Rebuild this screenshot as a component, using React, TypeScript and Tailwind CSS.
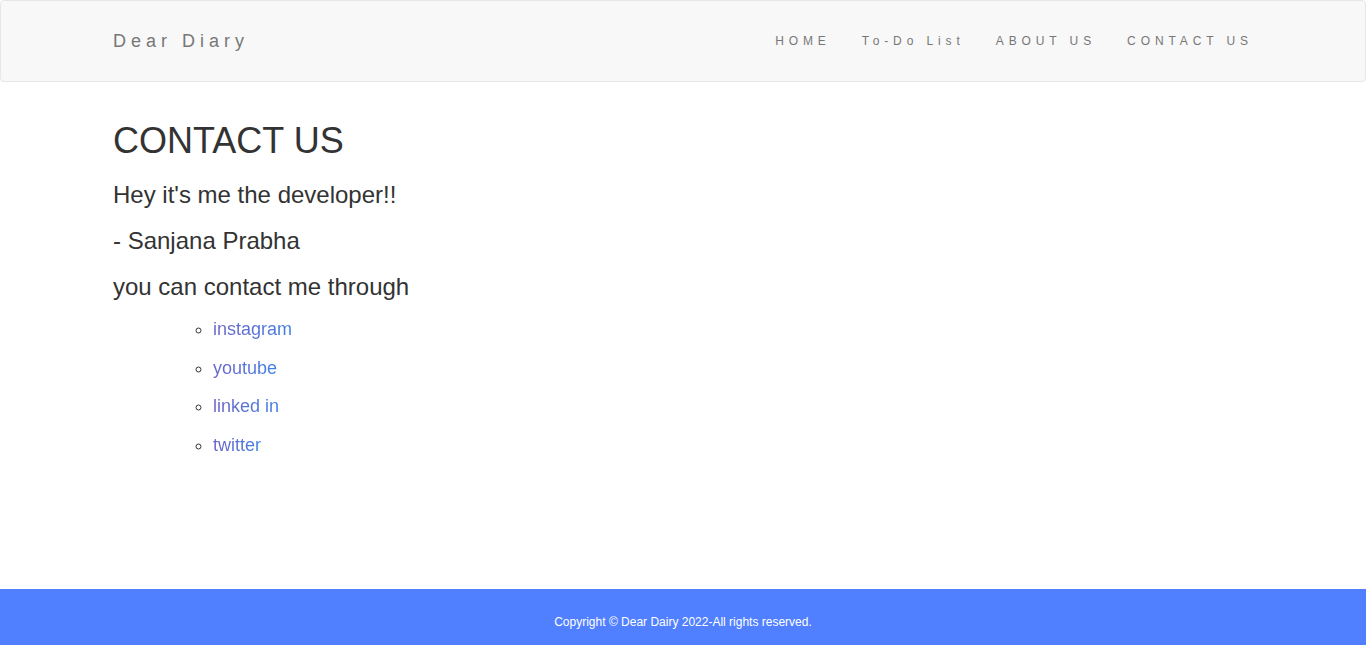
const navLinks = ["HOME", "To-Do List", "ABOUT US", "CONTACT US"];
const contacts = ["instagram", "youtube", "linked in", "twitter"];

export default function App() {
  return (
    <div className="flex min-h-[645px] flex-col bg-white font-['Liberation_Sans',Arial,sans-serif] text-[#333]">
      <nav className="h-[82px] rounded border border-[#e7e7e7] bg-[#f8f8f8]">
        <div className="mx-auto flex h-full w-[1170px] items-center justify-between px-[15px]">
          <a className="text-[18px] tracking-[5px] text-[#777]">Dear Diary</a>
          <ul className="flex items-center gap-[31px]">
            {navLinks.map((link) => (
              <li key={link} className="text-[12px] tracking-[4.9px] text-[#777]">
                {link}
              </li>
            ))}
          </ul>
        </div>
      </nav>

      <main className="mx-auto w-[1170px] flex-1 px-[15px]">
        <h1 className="mt-[39px] text-[36px] leading-[40px]">CONTACT US</h1>
        <p className="mt-[17px] text-[24px] leading-[34px]">Hey it's me the developer!!</p>
        <p className="mt-[12px] text-[24px] leading-[34px]">- Sanjana Prabha</p>
        <p className="mt-[12px] text-[24px] leading-[34px]">you can contact me through</p>
        <ul className="ml-[60px] mt-[12px] list-[circle] pl-[40px] marker:text-[#333]">
          {contacts.map((item) => (
            <li key={item} className="mb-[12.5px] text-[18px] leading-[26px]">
              <a className="bg-gradient-to-r from-[#6a64c8] to-[#3c7fe4] bg-clip-text text-transparent">
                {item}
              </a>
            </li>
          ))}
        </ul>
      </main>

      <footer className="flex h-[56px] items-center justify-center bg-[#5080ff] pt-[10px] text-[12px] text-white">
        Copyright © Dear Dairy 2022-All rights reserved.
      </footer>
    </div>
  );
}
